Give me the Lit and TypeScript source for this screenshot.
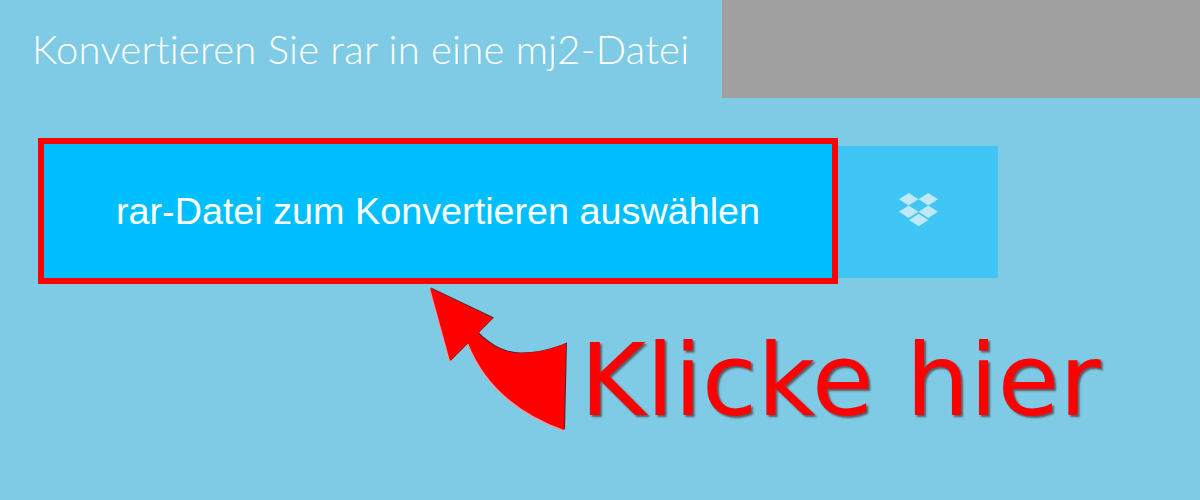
import { LitElement, html, css, svg } from "lit";
import { customElement } from "lit/decorators.js";

const ARROW = "M430 288 L493 318 L478 333 C492 347 506 353 520 353 C537 353 552 349 566 343 L564 430 Q492 404 468 343 L450 361 Z";

@customElement("app-root")
export class AppRoot extends LitElement {
  static styles = css`
    :host { display: block; width: 1200px; height: 500px; background: #7fcbe5; position: relative; overflow: hidden; font-family: "Liberation Sans", Arial, sans-serif; }
    .top { display: flex; height: 98px; }
    .title { flex: 1; margin: 0; padding: 0 0 0 32px; font: 300 40px/98px "Lato", sans-serif; font-variant-ligatures: none; letter-spacing: 0.24px; color: #fff; white-space: nowrap; }
    .ad { width: 478px; background: #a0a0a0; }
    .row { display: flex; align-items: center; margin: 40px 0 0 38px; }
    .choose { box-sizing: border-box; width: 800px; height: 146px; border: 6px solid #ff0000; background: #00bfff; color: #fff; font-size: 37.75px; display: flex; align-items: center; justify-content: center; }
    .drop { width: 160px; height: 132px; margin-top: 2px; background: #3fc6f4; display: flex; align-items: center; justify-content: center; }
    .drop svg { display: block; margin: 0 0 5px 1px; }
    .arrow { position: absolute; left: 420px; top: 280px; }
    .hint { position: absolute; left: 580px; top: 323px; font: 100.6px/116px "DejaVu Sans", sans-serif; color: #ff0000; text-shadow: 2px 2px 2px rgba(60,20,20,.6); white-space: nowrap; }
  `;

  render() {
    return html`
      <div class="top">
        <h1 class="title">Konvertieren Sie rar in eine mj2-Datei</h1>
        <div class="ad"></div>
      </div>
      <div class="row">
        <div class="choose">rar-Datei zum Konvertieren auswählen</div>
        <div class="drop">
          <svg width="39" height="34" viewBox="0 0 39 34" fill="#c0e8f6">
            ${[[9.7, 6.3], [29.3, 6.3], [9.7, 18.7], [29.3, 18.7], [19.7, 27]].map(
              ([x, y]) => svg`<polygon points="${x - 9.7},${y} ${x},${y - 6.3} ${x + 9.7},${y} ${x},${y + 6.3}"></polygon>`
            )}
          </svg>
        </div>
      </div>
      <svg class="arrow" width="160" height="160" viewBox="420 280 160 160">
        <defs>
          <filter id="s" x="-10%" y="-10%" width="120%" height="120%">
            <feGaussianBlur stdDeviation="0.6"></feGaussianBlur>
          </filter>
        </defs>
        <path d="${ARROW}" fill="#f29aa5" transform="translate(-1 1)" filter="url(#s)"></path>
        <path d="${ARROW}" fill="#3c2c34" transform="translate(1 -0.5)" filter="url(#s)"></path>
        <path d="${ARROW}" fill="#ff0000"></path>
      </svg>
      <div class="hint">Klicke hier</div>
    `;
  }
}
